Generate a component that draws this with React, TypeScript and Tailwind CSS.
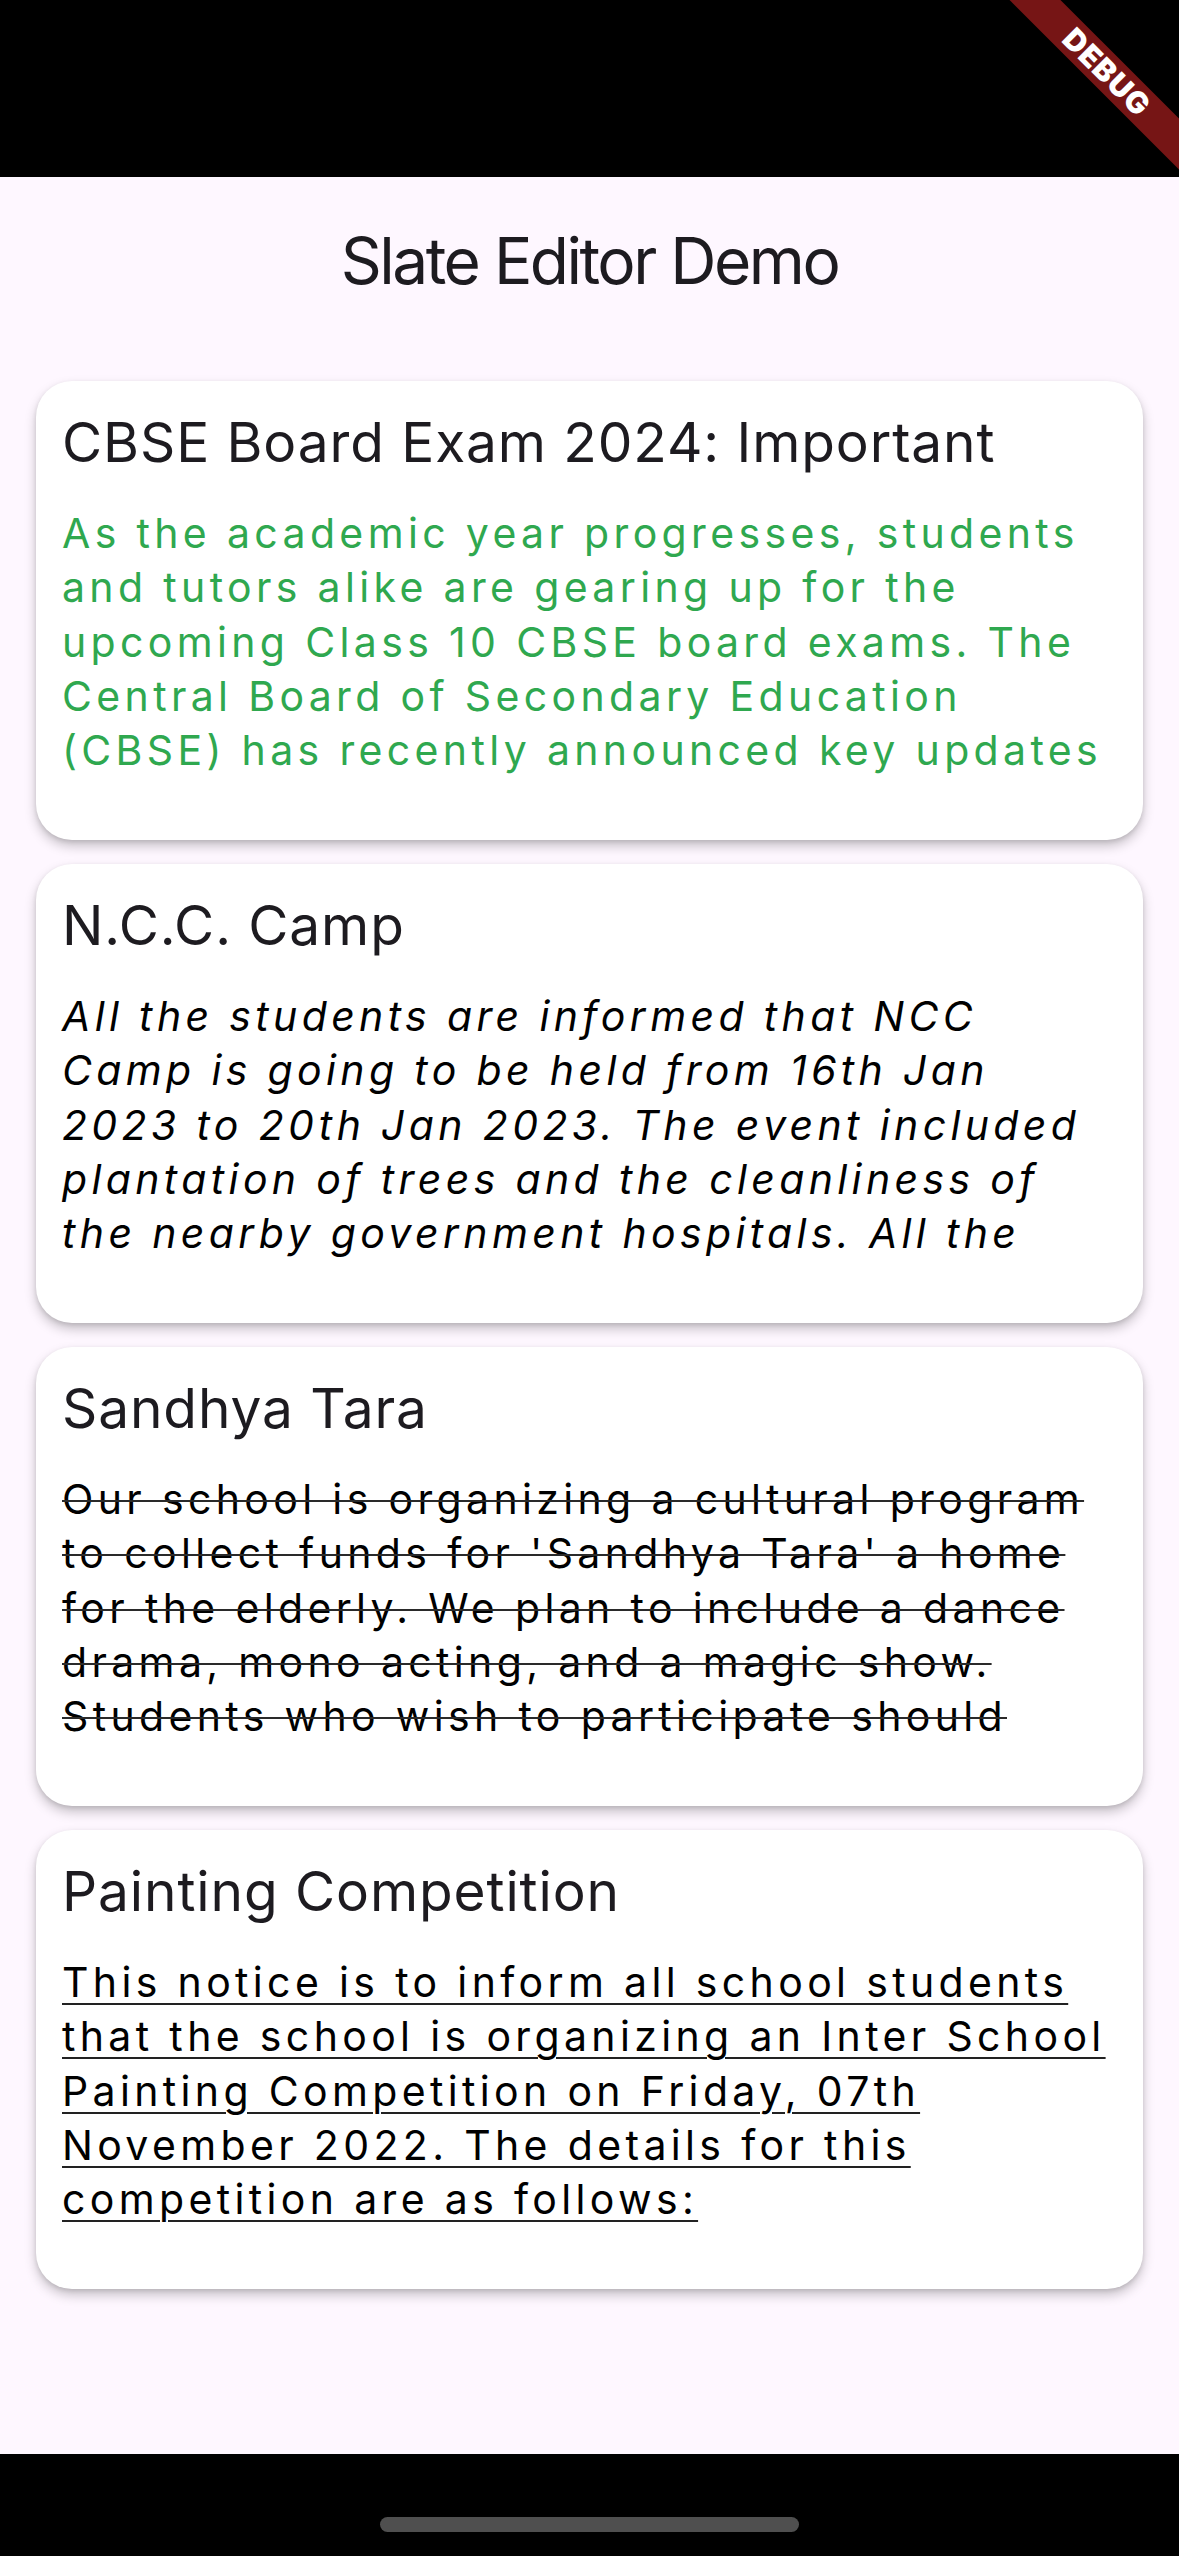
import React from "react";

type Note = {
  title: string;
  lines: string[];
  style: "green" | "italic" | "strike" | "underline";
};

const notes: Note[] = [
  {
    title: "CBSE Board Exam 2024: Important",
    style: "green",
    lines: [
      "As the academic year progresses, students",
      "and tutors alike are gearing up for the",
      "upcoming Class 10 CBSE board exams. The",
      "Central Board of Secondary Education",
      "(CBSE) has recently announced key updates",
    ],
  },
  {
    title: "N.C.C. Camp",
    style: "italic",
    lines: [
      "All the students are informed that NCC",
      "Camp is going to be held from 16th Jan",
      "2023 to 20th Jan 2023. The event included",
      "plantation of trees and the cleanliness of",
      "the nearby government hospitals. All the",
    ],
  },
  {
    title: "Sandhya Tara",
    style: "strike",
    lines: [
      "Our school is organizing a cultural program",
      "to collect funds for 'Sandhya Tara' a home",
      "for the elderly. We plan to include a dance",
      "drama, mono acting, and a magic show.",
      "Students who wish to participate should",
    ],
  },
  {
    title: "Painting Competition",
    style: "underline",
    lines: [
      "This notice is to inform all school students",
      "that the school is organizing an Inter School",
      "Painting Competition on Friday, 07th",
      "November 2022. The details for this",
      "competition are as follows:",
    ],
  },
];

function lineClass(style: Note["style"]) {
  switch (style) {
    case "green":
      return "text-[#2fa84f]";
    case "italic":
      return "text-black italic";
    case "strike":
      return "text-black line-through decoration-[2px] decoration-[#2a2a2a]";
    case "underline":
      return "text-black underline decoration-[2px] underline-offset-[6px] decoration-[#222]";
  }
}

function Card({ note }: { note: Note }) {
  return (
    <div className="h-[459px] rounded-[36px] bg-white shadow-[0_6px_12px_rgba(0,0,0,0.22),0_2px_4px_rgba(0,0,0,0.10)] pl-[26px] pr-[22px] pt-[28px]">
      <div className="text-[55px] leading-[66px] tracking-[0.9px] text-[#1d1b20] whitespace-nowrap">
        {note.title}
      </div>
      <div className="mt-[31px] text-[41px] leading-[54.3px] tracking-[4.35px]">
        {note.lines.map((l, i) => (
          <div key={i} className="whitespace-nowrap">
            <span className={lineClass(note.style)}>{l}</span>
          </div>
        ))}
      </div>
    </div>
  );
}

export default function App() {
  return (
    <div
      className="relative w-[1179px] h-[2556px] overflow-hidden bg-[#fef7ff] flex flex-col"
      style={{ fontFamily: "Inter, 'Noto Sans', sans-serif" }}
    >
      <div className="h-[177px] shrink-0 bg-black" />
      <div className="h-[168px] shrink-0 flex items-center justify-center">
        <h1 className="text-[64px] leading-[76px] tracking-[-2.5px] text-[#1d1b20] font-normal">
          Slate Editor Demo
        </h1>
      </div>
      <div className="flex-1 flex flex-col gap-[24px] px-[36px] pt-[36px]">
        {notes.map((n, i) => (
          <Card key={i} note={n} />
        ))}
      </div>
      <div className="h-[102px] shrink-0 bg-black flex justify-center pt-[63px]">
        <div className="w-[419px] h-[15px] rounded-full bg-[#4f4f4f]" />
      </div>

      {/* Debug banner */}
      <div className="absolute top-0 right-0 w-[200px] h-[200px] overflow-hidden pointer-events-none">
        <div className="absolute left-[-22px] top-[54px] w-[300px] h-[36px] rotate-45 bg-[#761515] flex items-center justify-center">
          <span className="text-white text-[30px] leading-[36px] font-black tracking-[1px]">
            DEBUG
          </span>
        </div>
      </div>
    </div>
  );
}
